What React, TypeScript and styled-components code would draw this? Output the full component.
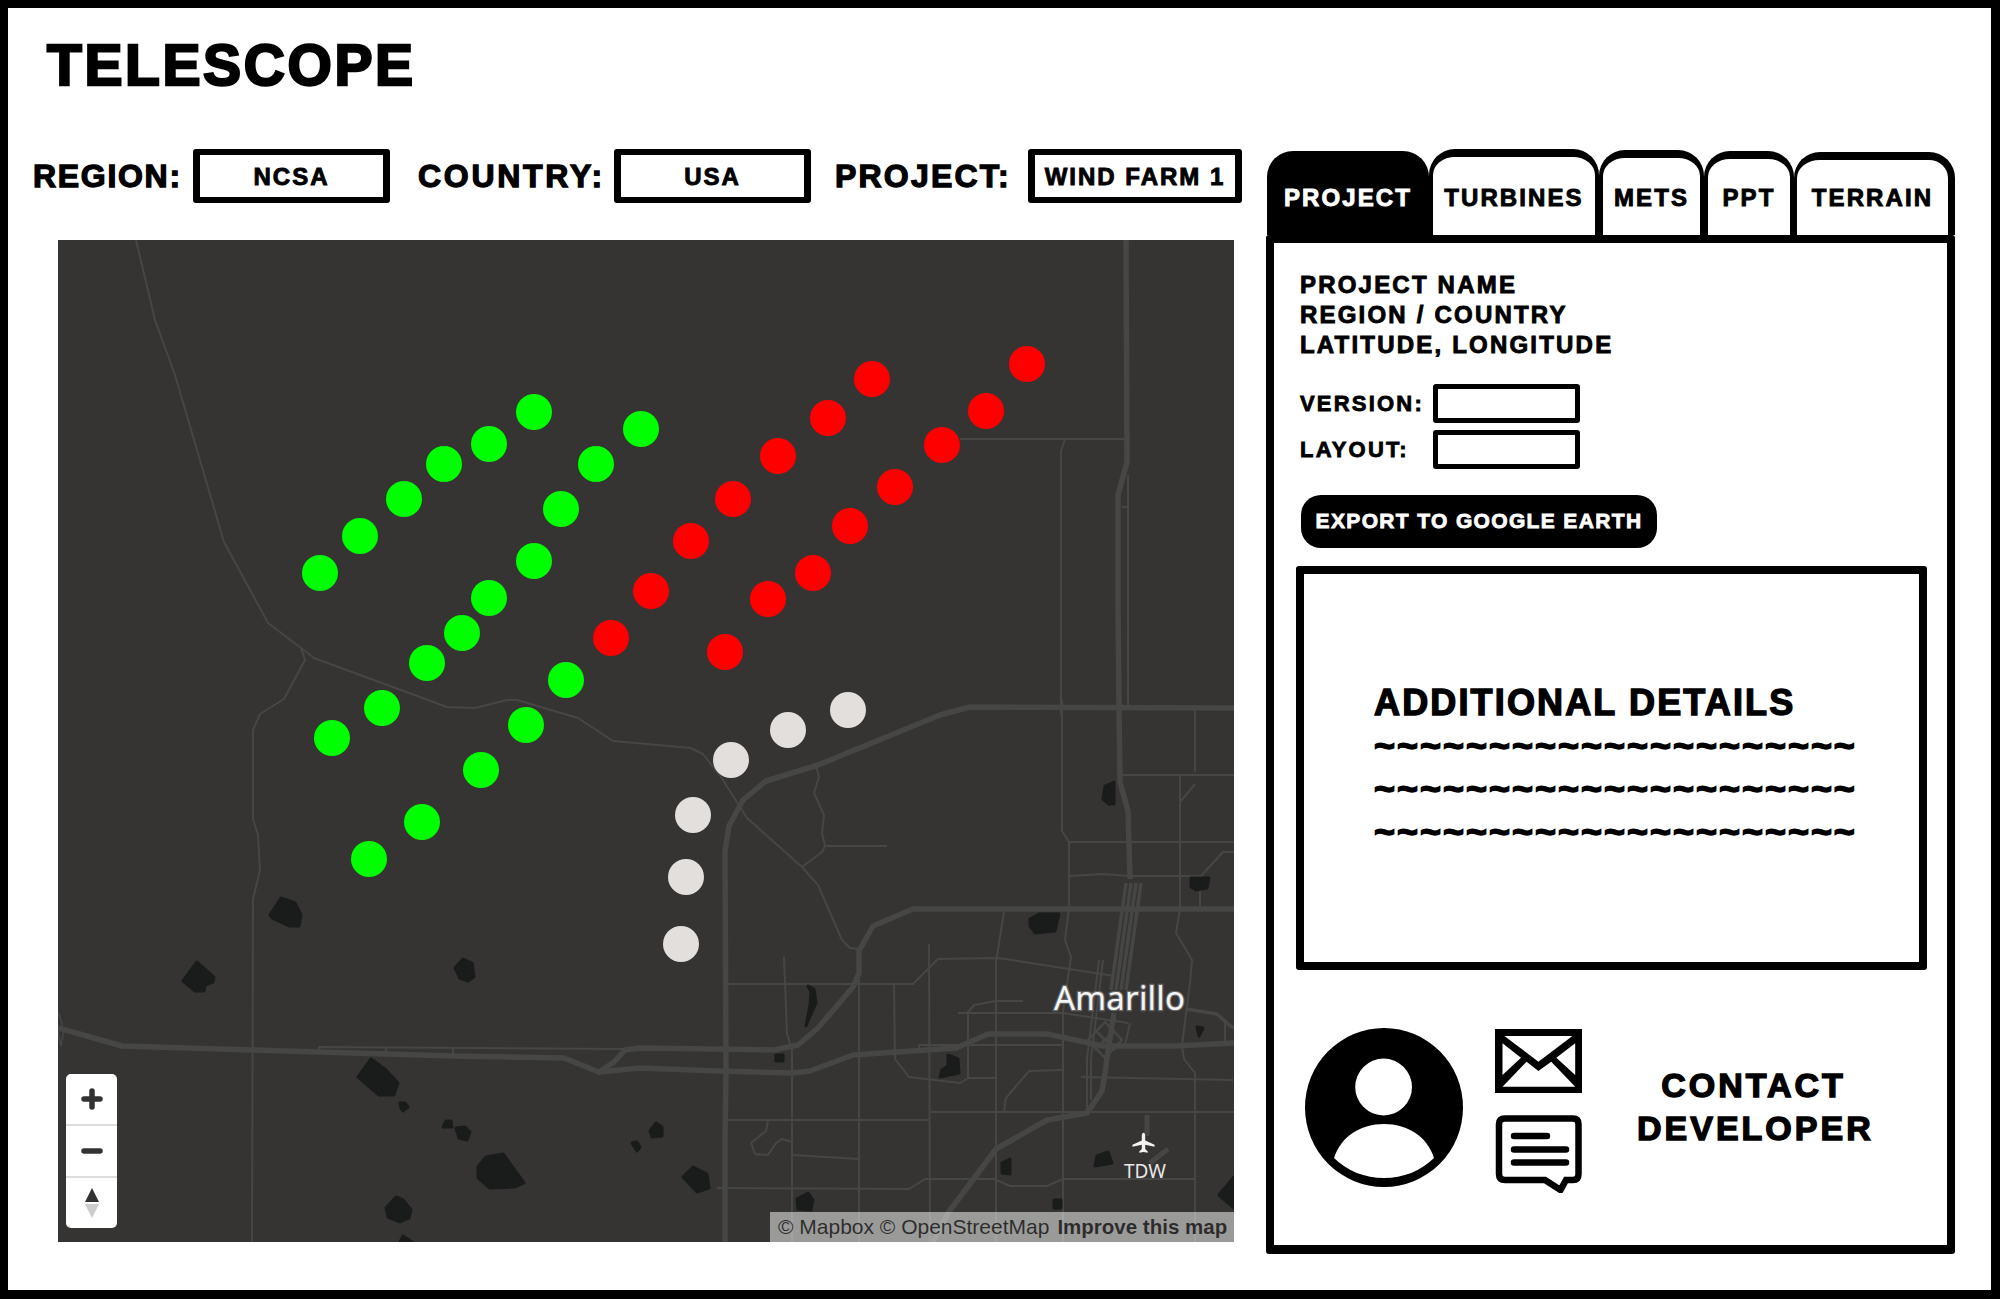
import React from "react";
import styled, { createGlobalStyle, css } from "styled-components";

const Global = createGlobalStyle`
  html, body { margin: 0; padding: 0; background: #fff; }
  * { box-sizing: border-box; }
`;

const heavy = css`
  font-family: "Liberation Sans", Arial, sans-serif;
  font-weight: 700;
  color: #000;
  white-space: nowrap;
`;

const Frame = styled.div`
  width: 2000px;
  height: 1299px;
  border-style: solid;
  border-color: #000;
  border-width: 8px 9px 9px 8px;
  background: #fff;
  overflow: hidden;
`;

const Title = styled.h1`
  ${heavy}
  margin: 0;
  padding: 29px 0 0 39px;
  height: 141px;
  font-size: 57px;
  line-height: 57px;
  letter-spacing: 2.6px;
  -webkit-text-stroke: 2.4px #000;
`;

const Body = styled.div`
  display: flex;
  align-items: flex-start;
`;

const LeftColumn = styled.div`
  width: 1258px;
  flex: none;
`;

const FilterRow = styled.div`
  display: flex;
  align-items: center;
  height: 54px;
  padding-left: 25px;
`;

const FilterLabel = styled.span<{ $w: number; $after: number; $spacing: number }>`
  ${heavy}
  width: ${(p) => p.$w}px;
  margin-right: ${(p) => p.$after}px;
  padding-top: 1px;
  font-size: 32px;
  letter-spacing: ${(p) => p.$spacing}px;
  -webkit-text-stroke: 1.3px #000;
`;

const FilterBox = styled.div<{ $w: number; $after?: number }>`
  ${heavy}
  width: ${(p) => p.$w}px;
  margin-right: ${(p) => p.$after ?? 0}px;
  height: 54px;
  flex: none;
  display: flex;
  align-items: center;
  justify-content: center;
  padding-top: 1px;
  border: 6px solid #000;
  border-width: 6px 7px;
  border-radius: 3px;
  font-size: 24px;
  letter-spacing: 2px;
  -webkit-text-stroke: 0.9px #000;
`;

const MapBox = styled.div`
  position: relative;
  width: 1176px;
  height: 1002px;
  margin: 37px 0 0 50px;
  background: #353433;
  overflow: hidden;
`;

const MapSvg = styled.svg`
  display: block;
  width: 100%;
  height: 100%;
`;

const ZoomControls = styled.div`
  position: absolute;
  left: 8px;
  bottom: 14px;
  width: 51px;
  height: 154px;
  background: #fff;
  border-radius: 5px;
  display: flex;
  flex-direction: column;
`;

const ZoomButton = styled.div`
  flex: 1;
  display: flex;
  align-items: center;
  justify-content: center;
  & + & {
    border-top: 2px solid #ddd;
  }
`;

const Attribution = styled.div`
  position: absolute;
  right: 0;
  bottom: 0;
  width: 464px;
  height: 30px;
  padding-left: 8px;
  display: flex;
  align-items: center;
  gap: 8px;
  background: rgba(255, 255, 255, 0.5);
  font-family: "Liberation Sans", Arial, sans-serif;
  font-size: 21px;
  color: rgba(0, 0, 0, 0.72);
  white-space: nowrap;
`;

const AttributionStrong = styled.span`
  font-weight: 700;
  font-size: 20.5px;
`;

const Panel = styled.div`
  width: 689px;
  flex: none;
`;

const TabBar = styled.div`
  display: flex;
  align-items: flex-end;
  height: 86px;
  margin-left: 1px;
`;

const Tab = styled.div<{ $w: number; $h: number; $active?: boolean; $end?: boolean }>`
  ${heavy}
  width: ${(p) => p.$w}px;
  height: ${(p) => p.$h}px;
  flex: none;
  display: flex;
  align-items: flex-end;
  justify-content: center;
  padding-bottom: 25px;
  line-height: 24px;
  background: ${(p) => (p.$active ? "#000" : "#fff")};
  color: ${(p) => (p.$active ? "#fff" : "#000")};
  border-style: solid;
  border-color: #000;
  border-width: 8px ${(p) => (p.$end ? 7 : 4)}px 0 ${(p) => (p.$end ? 3 : 4)}px;
  border-radius: 26px 26px 0 0;
  font-size: 24px;
  letter-spacing: 2.1px;
  -webkit-text-stroke: 0.9px ${(p) => (p.$active ? "#fff" : "#000")};
`;

const PanelBody = styled.div`
  height: 1019px;
  border: 8px solid #000;
  border-width: 8px 8px 9px 8px;
  border-radius: 3px;
  padding: 27px 0 0 26px;
`;

const InfoLine = styled.div`
  ${heavy}
  font-size: 24px;
  line-height: 30px;
  letter-spacing: 2.2px;
  -webkit-text-stroke: 0.9px #000;
`;

const FieldGrid = styled.div`
  display: grid;
  grid-template-columns: 133px 147px;
  grid-auto-rows: 39px;
  row-gap: 7px;
  align-items: center;
  margin-top: 24px;
`;

const FieldLabel = styled.span`
  ${heavy}
  font-size: 22px;
  letter-spacing: 2.2px;
  -webkit-text-stroke: 0.8px #000;
`;

const FieldBox = styled.div`
  height: 39px;
  border: 5px solid #000;
  border-radius: 3px;
`;

const ExportButton = styled.button`
  ${heavy}
  display: block;
  width: 356px;
  height: 53px;
  margin: 26px 0 0 1px;
  padding: 0 0 2px;
  border: 0;
  border-radius: 20px;
  background: #000;
  color: #fff;
  font-size: 21px;
  letter-spacing: 1.35px;
  -webkit-text-stroke: 0.8px #fff;
`;

const DetailsBox = styled.div`
  width: 631px;
  height: 404px;
  margin: 18px 0 0 -4px;
  padding: 107px 0 0 70px;
  border: 8px solid #000;
  border-radius: 3px;
`;

const DetailsHeading = styled.div`
  ${heavy}
  font-size: 36px;
  line-height: 43px;
  letter-spacing: 2.15px;
  -webkit-text-stroke: 1.4px #000;
`;

const Squiggle = styled.div`
  ${heavy}
  font-size: 36px;
  line-height: 43px;
  letter-spacing: 1.97px;
  -webkit-text-stroke: 1.4px #000;
`;

const ContactRow = styled.div`
  display: flex;
  align-items: flex-start;
  margin: 58px 0 0 5px;
`;

const ContactIcons = styled.div`
  display: flex;
  flex-direction: column;
  gap: 22px;
  margin: 1px 0 0 32px;
`;

const IconSvg = styled.svg`
  display: block;
`;

const ContactText = styled.div`
  ${heavy}
  width: 233px;
  margin: 36px 0 0 55px;
  text-align: center;
  font-size: 34px;
  line-height: 43px;
  letter-spacing: 3px;
  -webkit-text-stroke: 1.4px #000;
`;

const P = (pts: number[][]) => "M" + pts.map((p) => p.join(" ")).join("L");

const thin: number[][][] = [
  [[136,240],[155,320],[175,375],[224,542],[268,623],[301,648],[314,658],[447,707],[475,708],[507,700],[517,700],[578,718],[613,741],[691,748],[703,754],[721,777],[747,818],[802,867],[818,885],[842,940],[850,948],[859,949]],
  [[301,648],[305,660],[284,699],[260,714],[253,730],[253,819],[258,835],[260,870],[253,899],[252,1242]],
  [[319,1050],[319,1047],[625,1049]],
  [[386,1047],[386,1052]],
  [[453,1047],[453,1054]],
  [[960,439],[1127,439]],
  [[1065,439],[1061,451],[1061,715]],
  [[1128,475],[1128,707]],
  [[1122,507],[1128,507]],
  [[1062,700],[1062,831],[1069,842],[1069,880],[1069,909],[1065,940],[1071,957],[1063,1012],[1063,1242]],
  [[1195,709],[1195,772]],
  [[1180,775],[1180,802],[1195,784]],
  [[1180,802],[1180,876],[1180,908],[1176,933],[1192,960],[1190,983],[1182,1045],[1184,1059],[1195,1073],[1195,1242]],
  [[1122,775],[1234,775]],
  [[1069,842],[1234,842]],
  [[1069,876],[1103,874],[1130,876],[1201,876],[1223,852],[1234,852]],
  [[1200,876],[1200,908]],
  [[1004,912],[996,962],[996,1242]],
  [[929,944],[930,1242]],
  [[728,984],[913,984],[938,959],[998,958],[1114,976]],
  [[784,957],[787,1034],[792,1050],[792,1242]],
  [[859,973],[859,1242]],
  [[894,984],[895,1059],[909,1077],[960,1083],[968,1078],[968,1012],[974,1005],[996,1001],[1023,1001]],
  [[958,1013],[1063,1013],[1128,1023]],
  [[919,1050],[919,1045],[1063,1045]],
  [[727,1120],[929,1120]],
  [[931,1112],[1234,1112]],
  [[1081,1077],[1233,1080]],
  [[1004,1111],[1006,1098],[1029,1071],[1063,1070]],
  [[968,1078],[996,1078]],
  [[717,1188],[909,1189],[925,1179],[994,1179],[1010,1186],[1047,1186],[1063,1179],[1195,1179]],
  [[792,1155],[859,1159]],
  [[768,1121],[766,1131],[751,1143],[755,1154],[768,1155],[776,1143],[782,1139],[792,1142]],
  [[816,765],[819,777],[814,793],[824,815],[822,833],[825,846],[822,852],[802,867]],
  [[825,846],[887,846]],
  [[1099,960],[1087,1059],[1087,1113]],
  [[1103,960],[1091,1059],[1091,1100]],
  [[1130,1023],[1125,1045]],
  [[1225,1019],[1225,1045]],
];

const mid: number[][][] = [
  [[1126,883],[1111,990]],
  [[1131,883],[1116,990]],
  [[1136,883],[1121,990]],
  [[1141,883],[1126,990]],
  [[1186,1009],[1217,1014],[1229,1025],[1234,1028]],
];

const thick: number[][][] = [
  [[58,1028],[122,1046],[252,1050],[453,1056],[564,1058],[599,1072],[640,1068],[719,1071],[792,1073],[810,1071],[853,1055],[956,1048],[988,1034],[1047,1034],[1103,1046],[1174,1046],[1234,1043]],
  [[599,1072],[614,1062],[625,1050],[640,1048],[774,1050],[798,1045],[818,1028],[853,987],[859,973],[859,951],[873,926],[913,909],[1234,909]],
  [[1234,708],[970,707],[940,715],[818,765],[766,781],[743,800],[729,826],[725,851],[726,1070],[725,1141],[725,1242]],
  [[1126,240],[1127,462],[1118,495],[1118,602],[1119,707],[1120,782],[1128,811],[1130,879]],
  [[1114,1013],[1107,1057],[1106,1067],[1102,1091],[1087,1113],[1047,1120],[996,1149],[948,1213],[933,1242]],
];

const lakes: number[][][] = [
  [[358,1077],[371,1059],[386,1070],[398,1083],[394,1095],[379,1095],[367,1085]],
  [[400,1103],[405,1103],[408,1107],[403,1111],[401,1108]],
  [[443,1127],[446,1121],[451,1121],[452,1127]],
  [[456,1128],[465,1127],[470,1132],[467,1140],[459,1138]],
  [[478,1167],[486,1157],[503,1154],[524,1183],[515,1187],[490,1188],[478,1178]],
  [[386,1208],[396,1197],[403,1200],[411,1210],[409,1218],[400,1222],[388,1217]],
  [[400,1242],[403,1236],[412,1242]],
  [[632,1143],[637,1142],[640,1147],[637,1151]],
  [[683,1177],[693,1167],[707,1174],[709,1188],[697,1192]],
  [[650,1131],[656,1123],[662,1127],[662,1136],[652,1137]],
  [[797,1199],[808,1193],[813,1200],[811,1210],[798,1209]],
  [[270,915],[281,898],[295,903],[301,915],[299,926],[289,926],[272,918]],
  [[183,981],[197,962],[214,977],[213,982],[205,985],[204,991],[195,991]],
  [[455,968],[463,959],[472,963],[474,977],[468,981],[460,978]],
  [[1105,786],[1114,782],[1114,804],[1109,804],[1103,799]],
  [[1191,878],[1209,878],[1207,888],[1196,890],[1191,887]],
  [[1030,919],[1039,914],[1059,914],[1055,931],[1035,933],[1030,926]],
  [[808,986],[814,989],[816,1003],[810,1016],[806,1026],[810,1005],[811,992]],
  [[776,1055],[783,1055],[783,1061],[776,1061]],
  [[948,1055],[958,1059],[959,1073],[940,1077],[942,1070],[948,1066]],
  [[1197,1027],[1203,1028],[1199,1036]],
  [[1097,1156],[1108,1152],[1112,1163],[1095,1166]],
  [[1002,1163],[1010,1159],[1010,1174],[1002,1173]],
  [[1054,1200],[1061,1200],[1061,1208],[1054,1208]],
  [[1234,1177],[1219,1195],[1234,1208]],
];

const green = [[534,412],[489,444],[444,464],[404,499],[360,536],[320,573],[641,429],[596,464],[561,509],[534,561],[489,598],[462,633],[427,663],[382,708],[332,738],[566,680],[526,725],[481,770],[422,822],[369,859]];
const red = [[872,379],[828,418],[778,456],[733,499],[691,541],[651,591],[611,638],[1027,364],[986,411],[942,445],[895,487],[850,526],[813,573],[768,599],[725,652]];
const white = [[848,710],[788,730],[731,760],[693,815],[686,877],[681,944]];

const RoadMap = () => (
  <MapSvg viewBox="58 240 1176 1002">
    <g fill="none" strokeLinejoin="round" stroke="#464645">
      {thin.map((r, i) => <path key={i} d={P(r)} strokeWidth={2} />)}
      {mid.map((r, i) => <path key={i} d={P(r)} strokeWidth={3.5} />)}
      {thick.map((r, i) => <path key={i} d={P(r)} strokeWidth={5.5} />)}
      <path d="M1105 1022L1122 1040L1105 1058L1088 1040Z" strokeWidth={2.5} />
      <path d="M1095 1030L1115 1050M1115 1030L1095 1050" strokeWidth={2.5} />
      <path d="M1147 1115V1136M1168 1149L1150 1163" strokeWidth={5} />
      <path d="M58 1012Q66 1028 61 1046Q56 1028 58 1012" strokeWidth={1.5} />
    </g>
    <g fill="#1a1c1b" stroke="#1a1c1b" strokeWidth={3} strokeLinejoin="round">
      {lakes.map((l, i) => <path key={i} d={P(l) + "Z"} />)}
    </g>
    {green.map(([x, y], i) => <circle key={i} cx={x} cy={y} r={18} fill="#00ff00" />)}
    {red.map(([x, y], i) => <circle key={i} cx={x} cy={y} r={18} fill="#ff0000" />)}
    {white.map(([x, y], i) => <circle key={i} cx={x} cy={y} r={18} fill="#e3dfdd" />)}
    <text x={1054} y={1010} fontFamily="'Noto Sans', sans-serif" fontSize={33} fill="#f4f4f4" stroke="#666" strokeWidth={2.5} paintOrder="stroke" letterSpacing={0.2}>Amarillo</text>
    <text x={1124} y={1178} fontFamily="'Noto Sans', sans-serif" fontSize={19} fill="#e8e8e8">TDW</text>
    <path transform="translate(1143.5 1143) scale(0.85)" fill="#f2f2f2" d="M0 -12C1.5 -12 2 -10 2 -8V-3L13 2V4.5L2 2V7L5 10V11.5L0 10.5L-5 11.5V10L-2 7V2L-13 4.5V2L-2 -3V-8C-2 -10 -1.5 -12 0 -12Z" />
  </MapSvg>
);

const PlusIcon = () => (
  <IconSvg width="22" height="22" viewBox="0 0 22 22">
    <path d="M3 11H19M11 3V19" stroke="#333" strokeWidth="5.5" strokeLinecap="round" />
  </IconSvg>
);
const MinusIcon = () => (
  <IconSvg width="22" height="8" viewBox="0 0 22 8">
    <path d="M3 4H19" stroke="#333" strokeWidth="5.5" strokeLinecap="round" />
  </IconSvg>
);
const CompassIcon = () => (
  <IconSvg width="16" height="32" viewBox="0 0 16 32">
    <path d="M8 1L15 15H1Z" fill="#333" />
    <path d="M8 31L15 17H1Z" fill="#ccc" />
  </IconSvg>
);

const Avatar = () => (
  <IconSvg width="158" height="159" viewBox="0 0 158 159">
    <ellipse cx="79" cy="79.5" rx="79" ry="79.5" fill="#000" />
    <circle cx="78.6" cy="59" r="28.4" fill="#fff" />
    <path fill="#fff" d="M29 130C36 108 56 96 79 96C102 96 122 108 129 130C116 143 98 150 79 150C60 150 42 143 29 130Z" />
  </IconSvg>
);

const Envelope = () => (
  <IconSvg width="87" height="64" viewBox="0 0 87 64">
    <rect width="87" height="64" fill="#000" />
    <path fill="#fff" d="M9.4 7H77.4L43.4 32.7Z" />
    <path fill="#fff" d="M7.5 14.3L26 28.7L7.5 46Z" />
    <path fill="#fff" d="M80.2 14.3L61.3 28.7L80.2 46Z" />
    <path fill="#fff" d="M7.5 57.7L31.6 32.7L43.4 42L56.2 32.7L80.2 57.7Z" />
  </IconSvg>
);

const Chat = () => (
  <IconSvg width="87" height="78" viewBox="0 0 87 78">
    <path fill="#fff" stroke="#000" strokeWidth="6.5" d="M10 3.5H78Q83.5 3.5 83.5 9V59Q83.5 65 78 65H71L65.5 75L50 65H10Q4 65 4 59V9Q4 3.5 10 3.5Z" />
    <path stroke="#000" strokeWidth="6.5" strokeLinecap="round" d="M19 21H52M19 34.5H71M19 47.5H71" />
  </IconSvg>
);

export default function App() {
  return (
    <>
      <Global />
      <Frame>
        <Title>TELESCOPE</Title>
        <Body>
          <LeftColumn>
            <FilterRow>
              <FilterLabel $w={147} $after={13} $spacing={1.7}>REGION:</FilterLabel>
              <FilterBox $w={197} $after={28}>NCSA</FilterBox>
              <FilterLabel $w={184} $after={12} $spacing={2.7}>COUNTRY:</FilterLabel>
              <FilterBox $w={197} $after={24}>USA</FilterBox>
              <FilterLabel $w={174} $after={19} $spacing={2.2}>PROJECT:</FilterLabel>
              <FilterBox $w={214}>WIND FARM 1</FilterBox>
            </FilterRow>
            <MapBox>
              <RoadMap />
              <ZoomControls>
                <ZoomButton><PlusIcon /></ZoomButton>
                <ZoomButton><MinusIcon /></ZoomButton>
                <ZoomButton><CompassIcon /></ZoomButton>
              </ZoomControls>
              <Attribution>
                <span>© Mapbox © OpenStreetMap</span>
                <AttributionStrong>Improve this map</AttributionStrong>
              </Attribution>
            </MapBox>
          </LeftColumn>
          <Panel>
            <TabBar>
              <Tab $w={162} $h={84} $active>PROJECT</Tab>
              <Tab $w={170} $h={86}>TURBINES</Tab>
              <Tab $w={105} $h={85}>METS</Tab>
              <Tab $w={90} $h={84}>PPT</Tab>
              <Tab $w={161} $h={83} $end>TERRAIN</Tab>
            </TabBar>
            <PanelBody>
              <InfoLine>PROJECT NAME</InfoLine>
              <InfoLine>REGION / COUNTRY</InfoLine>
              <InfoLine>LATITUDE, LONGITUDE</InfoLine>
              <FieldGrid>
                <FieldLabel>VERSION:</FieldLabel>
                <FieldBox />
                <FieldLabel>LAYOUT:</FieldLabel>
                <FieldBox />
              </FieldGrid>
              <ExportButton>EXPORT TO GOOGLE EARTH</ExportButton>
              <DetailsBox>
                <DetailsHeading>ADDITIONAL DETAILS</DetailsHeading>
                <Squiggle>~~~~~~~~~~~~~~~~~~~~~</Squiggle>
                <Squiggle>~~~~~~~~~~~~~~~~~~~~~</Squiggle>
                <Squiggle>~~~~~~~~~~~~~~~~~~~~~</Squiggle>
              </DetailsBox>
              <ContactRow>
                <Avatar />
                <ContactIcons>
                  <Envelope />
                  <Chat />
                </ContactIcons>
                <ContactText>CONTACT<br />DEVELOPER</ContactText>
              </ContactRow>
            </PanelBody>
          </Panel>
        </Body>
      </Frame>
    </>
  );
}
